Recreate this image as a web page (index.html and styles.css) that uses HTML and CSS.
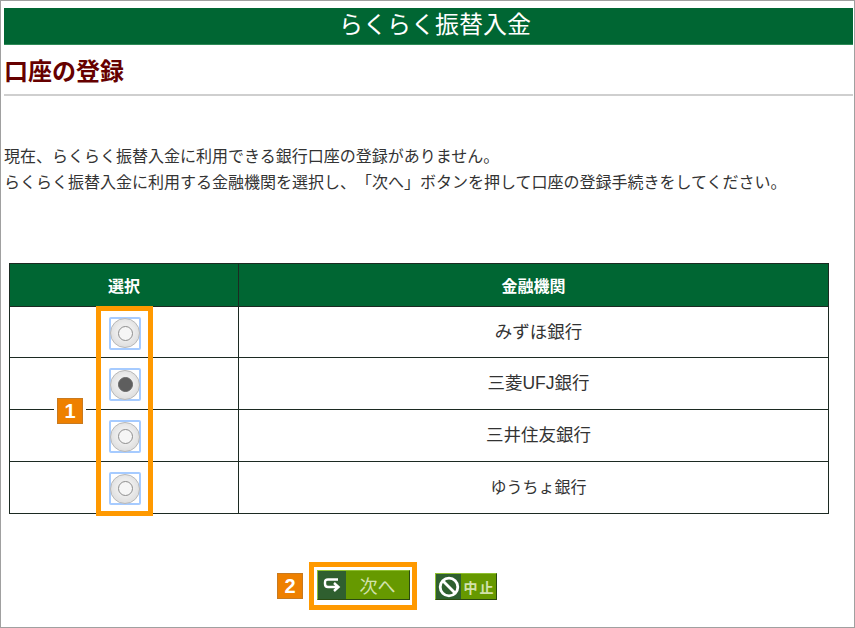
FILE: index.html
```html
<!DOCTYPE html>
<html lang="ja">
<head>
<meta charset="utf-8">
<title>らくらく振替入金</title>
<link rel="stylesheet" href="styles.css">
</head>
<body>
<div class="frame">
  <header class="banner">らくらく振替入金</header>
  <h1 class="heading">口座の登録</h1>
  <p class="intro">現在、らくらく振替入金に利用できる銀行口座の登録がありません。<br>らくらく振替入金に利用する金融機関を選択し、「次へ」ボタンを押して口座の登録手続きをしてください。</p>
  <table class="banks">
    <thead>
      <tr><th class="col-select">選択</th><th>金融機関</th></tr>
    </thead>
    <tbody>
      <tr class="first"><td class="cell-radio"><span class="radio"><span class="disc"><span class="dot"></span></span></span></td><td class="cell-name">みずほ銀行</td></tr>
      <tr><td class="cell-radio"><span class="radio"><span class="disc"><span class="dot on"></span></span></span></td><td class="cell-name">三菱UFJ銀行</td></tr>
      <tr><td class="cell-radio"><span class="radio"><span class="disc"><span class="dot"></span></span></span></td><td class="cell-name">三井住友銀行</td></tr>
      <tr><td class="cell-radio"><span class="radio"><span class="disc"><span class="dot"></span></span></span></td><td class="cell-name compact">ゆうちょ銀行</td></tr>
    </tbody>
  </table>
  <div class="actions">
    <button class="btn btn-next" type="button">
      <span class="btn-icon">
        <svg width="18" height="16" viewBox="0 0 18 16"><path d="M15 2.500H5Q2 2.500 2 5.500V7Q2 10 5 10H15M11 6L15.500 10L11 14" fill="none" stroke="#fff" stroke-width="2.400"/></svg>
      </span>
      <span class="btn-label">次へ</span>
    </button>
    <button class="btn btn-stop" type="button">
      <span class="btn-icon">
        <svg width="22" height="22" viewBox="0 0 22 22"><circle cx="11" cy="11" r="8.800" fill="none" stroke="#fff" stroke-width="2.800"/><path d="M5 5L17 17" stroke="#fff" stroke-width="2.800"/></svg>
      </span>
      <span class="btn-label">中止</span>
    </button>
  </div>
  <div class="mark mark-radios"></div>
  <div class="badge badge-1">1</div>
  <div class="mark mark-next"></div>
  <div class="badge badge-2">2</div>
</div>
</body>
</html>
```
FILE: styles.css
```css
* { box-sizing: border-box; }
html, body { margin: 0; padding: 0; background: #fff; }
body {
  width: 855px;
  height: 628px;
  overflow: hidden;
  font-family: "Liberation Sans", "Noto Sans CJK JP", sans-serif;
  color: #222;
  text-spacing-trim: space-all;
}
.frame {
  position: relative;
  width: 855px;
  height: 628px;
  border: 1px solid #a0a0a0;
  padding: 7px 1px 0 3px;
}
.banner {
  height: 37px;
  background: #006633;
  border-bottom: 1px solid #2e8a58;
  color: #fff;
  font-size: 24px;
  line-height: 34px;
  text-align: center;
  padding-left: 13px;
}
.heading {
  margin: 0;
  height: 51px;
  padding: 12px 0 0 0;
  border-bottom: 2px solid #cfcfcf;
  color: #660000;
  font-size: 24px;
  line-height: 30px;
  font-weight: bold;
}
.intro {
  margin: 0;
  padding-top: 48px;
  font-size: 16px;
  line-height: 26px;
  white-space: nowrap;
  color: #333;
}
.banks {
  margin: 67px 0 0 5px;
  width: 820px;
  border-collapse: collapse;
  table-layout: fixed;
  font-size: 17.500px;
}
.banks th, .banks td {
  border: 1px solid #1c2a22;
  padding: 0;
  text-align: center;
  vertical-align: middle;
}
.banks th {
  height: 43px;
  background: #006633;
  color: #fff;
  font-size: 16px;
  font-weight: bold;
}
.col-select { width: 229px; }
.banks td { height: 52px; color: #333; }
.banks .first td { height: 51px; }
.banks .cell-name { padding: 0 0 4px 10px; }
.banks .cell-name.compact { font-size: 16px; }
.banks .cell-radio { padding-left: 2px; }
.radio {
  display: flex;
  align-items: center;
  justify-content: center;
  width: 32px;
  height: 33px;
  margin: 2px auto 0;
  border: 2px solid #a6cbff;
  border-radius: 2px;
}
.disc {
  display: flex;
  align-items: center;
  justify-content: center;
  flex: none;
  width: 30px;
  height: 30px;
  border-radius: 50%;
  background: radial-gradient(circle at 50% 45%, #ececec 40%, #dadada 85%);
  border: 1px solid #b8b8b8;
}
.dot {
  width: 15px;
  height: 15px;
  border-radius: 50%;
  background: #f6f6f6;
  border: 1px solid #8e8e8e;
}
.dot.on { background: #5e5e5e; border-color: #666; }
.actions {
  display: flex;
  align-items: flex-end;
  margin: 56px 0 0 313px;
  gap: 25px;
}
.btn {
  display: flex;
  align-items: stretch;
  padding: 0;
  border: 1px solid #8fbf30;
  border-right-color: #2a4a10;
  border-bottom-color: #2a4a10;
  background: #669900;
  color: #d2e2ac;
  font-family: inherit;
}
.btn-next { width: 93px; height: 30px; font-size: 18px; }
.btn-stop { width: 62px; height: 27px; font-size: 14px; font-weight: bold; }
.btn-icon {
  display: flex;
  align-items: center;
  justify-content: center;
  background: #2f5f2f;
}
.btn-next .btn-icon { width: 28px; }
.btn-stop .btn-icon { width: 25px; }
.btn-label {
  flex: 1;
  display: flex;
  align-items: center;
  justify-content: center;
}
.btn-stop .btn-label { letter-spacing: 2px; padding-left: 2px; }
.mark {
  position: absolute;
  border: 5px solid #ff9900;
}
.mark-radios { left: 95px; top: 305px; width: 57px; height: 210px; }
.mark-next { left: 308px; top: 561px; width: 108px; height: 48px; }
.badge {
  position: absolute;
  width: 26px;
  height: 26px;
  background: #ee8000;
  border: 1px solid #c87a20;
  box-shadow: 0 0 0 3px #fff;
  color: #fff;
  font-size: 20px;
  font-weight: bold;
  line-height: 24px;
  text-align: center;
}
.badge-1 { left: 56px; top: 397px; }
.badge-2 { left: 276px; top: 572px; }
```
